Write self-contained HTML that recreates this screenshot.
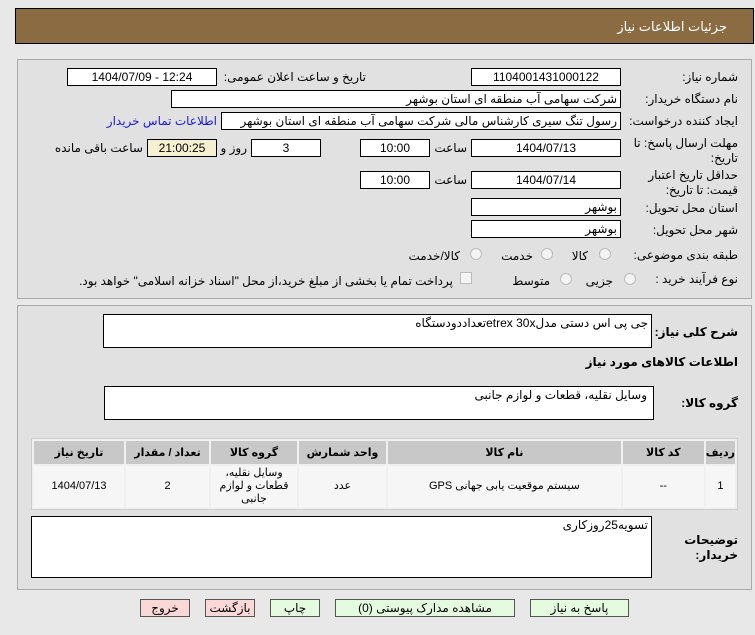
<!DOCTYPE html>
<html><head><meta charset="utf-8"><style>
*{box-sizing:border-box;margin:0;padding:0}
body{width:755px;height:635px;background:#e8e8e8;position:relative;overflow:hidden;font-family:"Liberation Sans","DejaVu Sans",sans-serif;font-size:12px;color:#000}
.a{position:absolute;white-space:nowrap}
.hdr{left:15px;top:8px;width:739px;height:36px;background:#8b6b42;border:1px solid #000}
.hdr span{position:absolute;right:26px;top:10px;color:#fff;font-size:13px}
.pan{border:1px solid #aaa;background:#e1e1e1}
.box{position:absolute;background:#fff;border:1px solid #000;height:18px;line-height:16px;text-align:center;font-size:12px;overflow:hidden;white-space:nowrap}
.r{text-align:right;padding-right:3px;direction:rtl}
.l{position:absolute;white-space:nowrap;direction:rtl;text-align:right}
.b{font-weight:bold}
.rad{position:absolute;width:12px;height:12px;border-radius:50%;border:1px solid #bbb;background:#f4f4f4}
table{position:absolute;border-collapse:separate;border-spacing:2px;background:#f0f0f0;border:1px solid #ccc}
th{background:#c8c8c8;font-weight:bold;height:23px;font-size:11px}
td{background:#f6f6f6;text-align:center;font-size:11px;height:41px;line-height:13px}
.btn{position:absolute;top:599px;height:18px;border:1px solid #555;text-align:center;line-height:16px;font-size:12px}
.g{background:#e4fbe0}.p{background:#fbd8d8}
</style></head><body>
<div class="a hdr"><span>جزئیات اطلاعات نیاز</span></div>
<div class="a pan" style="left:17px;top:59px;width:735px;height:240px"></div>
<div class="a pan" style="left:17px;top:305px;width:735px;height:285px"></div>

<div class="l" style="right:17px;top:70px">شماره نیاز:</div>
<div class="box" style="left:471px;top:68px;width:150px">1104001431000122</div>
<div class="l" style="right:389px;top:70px">تاریخ و ساعت اعلان عمومی:</div>
<div class="box" style="left:67px;top:68px;width:150px">1404/07/09 - 12:24</div>

<div class="l" style="right:17px;top:92px">نام دستگاه خریدار:</div>
<div class="box r" style="left:171px;top:90px;width:450px">شرکت سهامی آب منطقه ای استان بوشهر</div>

<div class="l" style="right:17px;top:114px">ایجاد کننده درخواست:</div>
<div class="box r" style="left:221px;top:112px;width:400px">رسول تنگ سیری کارشناس مالی شرکت سهامی آب منطقه ای استان بوشهر</div>
<div class="l" style="right:538px;top:114px;color:#1a1adb">اطلاعات تماس خریدار</div>

<div class="l" style="right:17px;top:136px">مهلت ارسال پاسخ: تا</div>
<div class="l" style="right:17px;top:151px">تاریخ:</div>
<div class="box" style="left:471px;top:139px;width:150px">1404/07/13</div>
<div class="l" style="right:288px;top:141px">ساعت</div>
<div class="box" style="left:360px;top:139px;width:70px">10:00</div>
<div class="box" style="left:251px;top:139px;width:70px">3</div>
<div class="l" style="right:508px;top:141px">روز و</div>
<div class="box" style="left:147px;top:139px;width:70px;background:#f5f0d0">21:00:25</div>
<div class="l" style="right:612px;top:141px">ساعت باقی مانده</div>

<div class="l" style="right:17px;top:168px">حداقل تاریخ اعتبار</div>
<div class="l" style="right:17px;top:183px">قیمت: تا تاریخ:</div>
<div class="box" style="left:471px;top:171px;width:150px">1404/07/14</div>
<div class="l" style="right:288px;top:173px">ساعت</div>
<div class="box" style="left:360px;top:171px;width:70px">10:00</div>

<div class="l" style="right:17px;top:201px">استان محل تحویل:</div>
<div class="box r" style="left:471px;top:198px;width:150px">بوشهر</div>
<div class="l" style="right:17px;top:223px">شهر محل تحویل:</div>
<div class="box r" style="left:471px;top:220px;width:150px">بوشهر</div>

<div class="l" style="right:17px;top:248px">طبقه بندی موضوعی:</div>
<div class="rad" style="left:599px;top:248px"></div><div class="l" style="right:167px;top:249px">کالا</div>
<div class="rad" style="left:541px;top:248px"></div><div class="l" style="right:222px;top:249px">خدمت</div>
<div class="rad" style="left:470px;top:248px"></div><div class="l" style="right:295px;top:249px">کالا/خدمت</div>

<div class="l" style="right:17px;top:272px">نوع فرآیند خرید :</div>
<div class="rad" style="left:624px;top:273px"></div><div class="l" style="right:142px;top:274px">جزیی</div>
<div class="rad" style="left:560px;top:273px"></div><div class="l" style="right:205px;top:274px">متوسط</div>
<div class="a" style="left:460px;top:272px;width:12px;height:12px;border:1px solid #bbb;background:#f4f4f4"></div>
<div class="l" style="right:302px;top:274px">پرداخت تمام یا بخشی از مبلغ خرید،از محل "اسناد خزانه اسلامی" خواهد بود.</div>

<div class="l b" style="right:17px;top:325px">شرح کلی نیاز:</div>
<div class="box r" style="left:103px;top:314px;width:549px;height:34px;text-align:right">جی پی اس دستی مدلetrex 30xتعداددودستگاه</div>
<div class="l b" style="right:17px;top:355px">اطلاعات کالاهای مورد نیاز</div>
<div class="l b" style="right:17px;top:396px">گروه کالا:</div>
<div class="box r" style="left:104px;top:386px;width:550px;height:34px;padding-right:6px">وسایل نقلیه، قطعات و لوازم جانبی</div>

<table style="left:31px;top:438px;width:707px">
<tr><th style="width:90px">تاریخ نیاز</th><th style="width:83px">تعداد / مقدار</th><th style="width:86px">گروه کالا</th><th style="width:87px">واحد شمارش</th><th>نام کالا</th><th style="width:81px">کد کالا</th><th style="width:27px">ردیف</th></tr>
<tr><td>1404/07/13</td><td>2</td><td dir="rtl">وسایل نقلیه،<br>قطعات و لوازم<br>جانبی</td><td>عدد</td><td dir="rtl">سیستم موقعیت یابی جهانی GPS</td><td>--</td><td>1</td></tr>
</table>

<div class="l b" style="right:17px;top:533px">توضیحات</div>
<div class="l b" style="right:17px;top:548px">خریدار:</div>
<div class="box r" style="left:31px;top:516px;width:621px;height:62px;text-align:right">تسویه25روزکاری</div>

<div class="btn p" style="left:140px;width:50px">خروج</div>
<div class="btn p" style="left:205px;width:50px">بازگشت</div>
<div class="btn g" style="left:270px;width:50px">چاپ</div>
<div class="btn g" style="left:335px;width:180px">مشاهده مدارک پیوستی (0)</div>
<div class="btn g" style="left:530px;width:99px">پاسخ به نیاز</div>
</body></html>
